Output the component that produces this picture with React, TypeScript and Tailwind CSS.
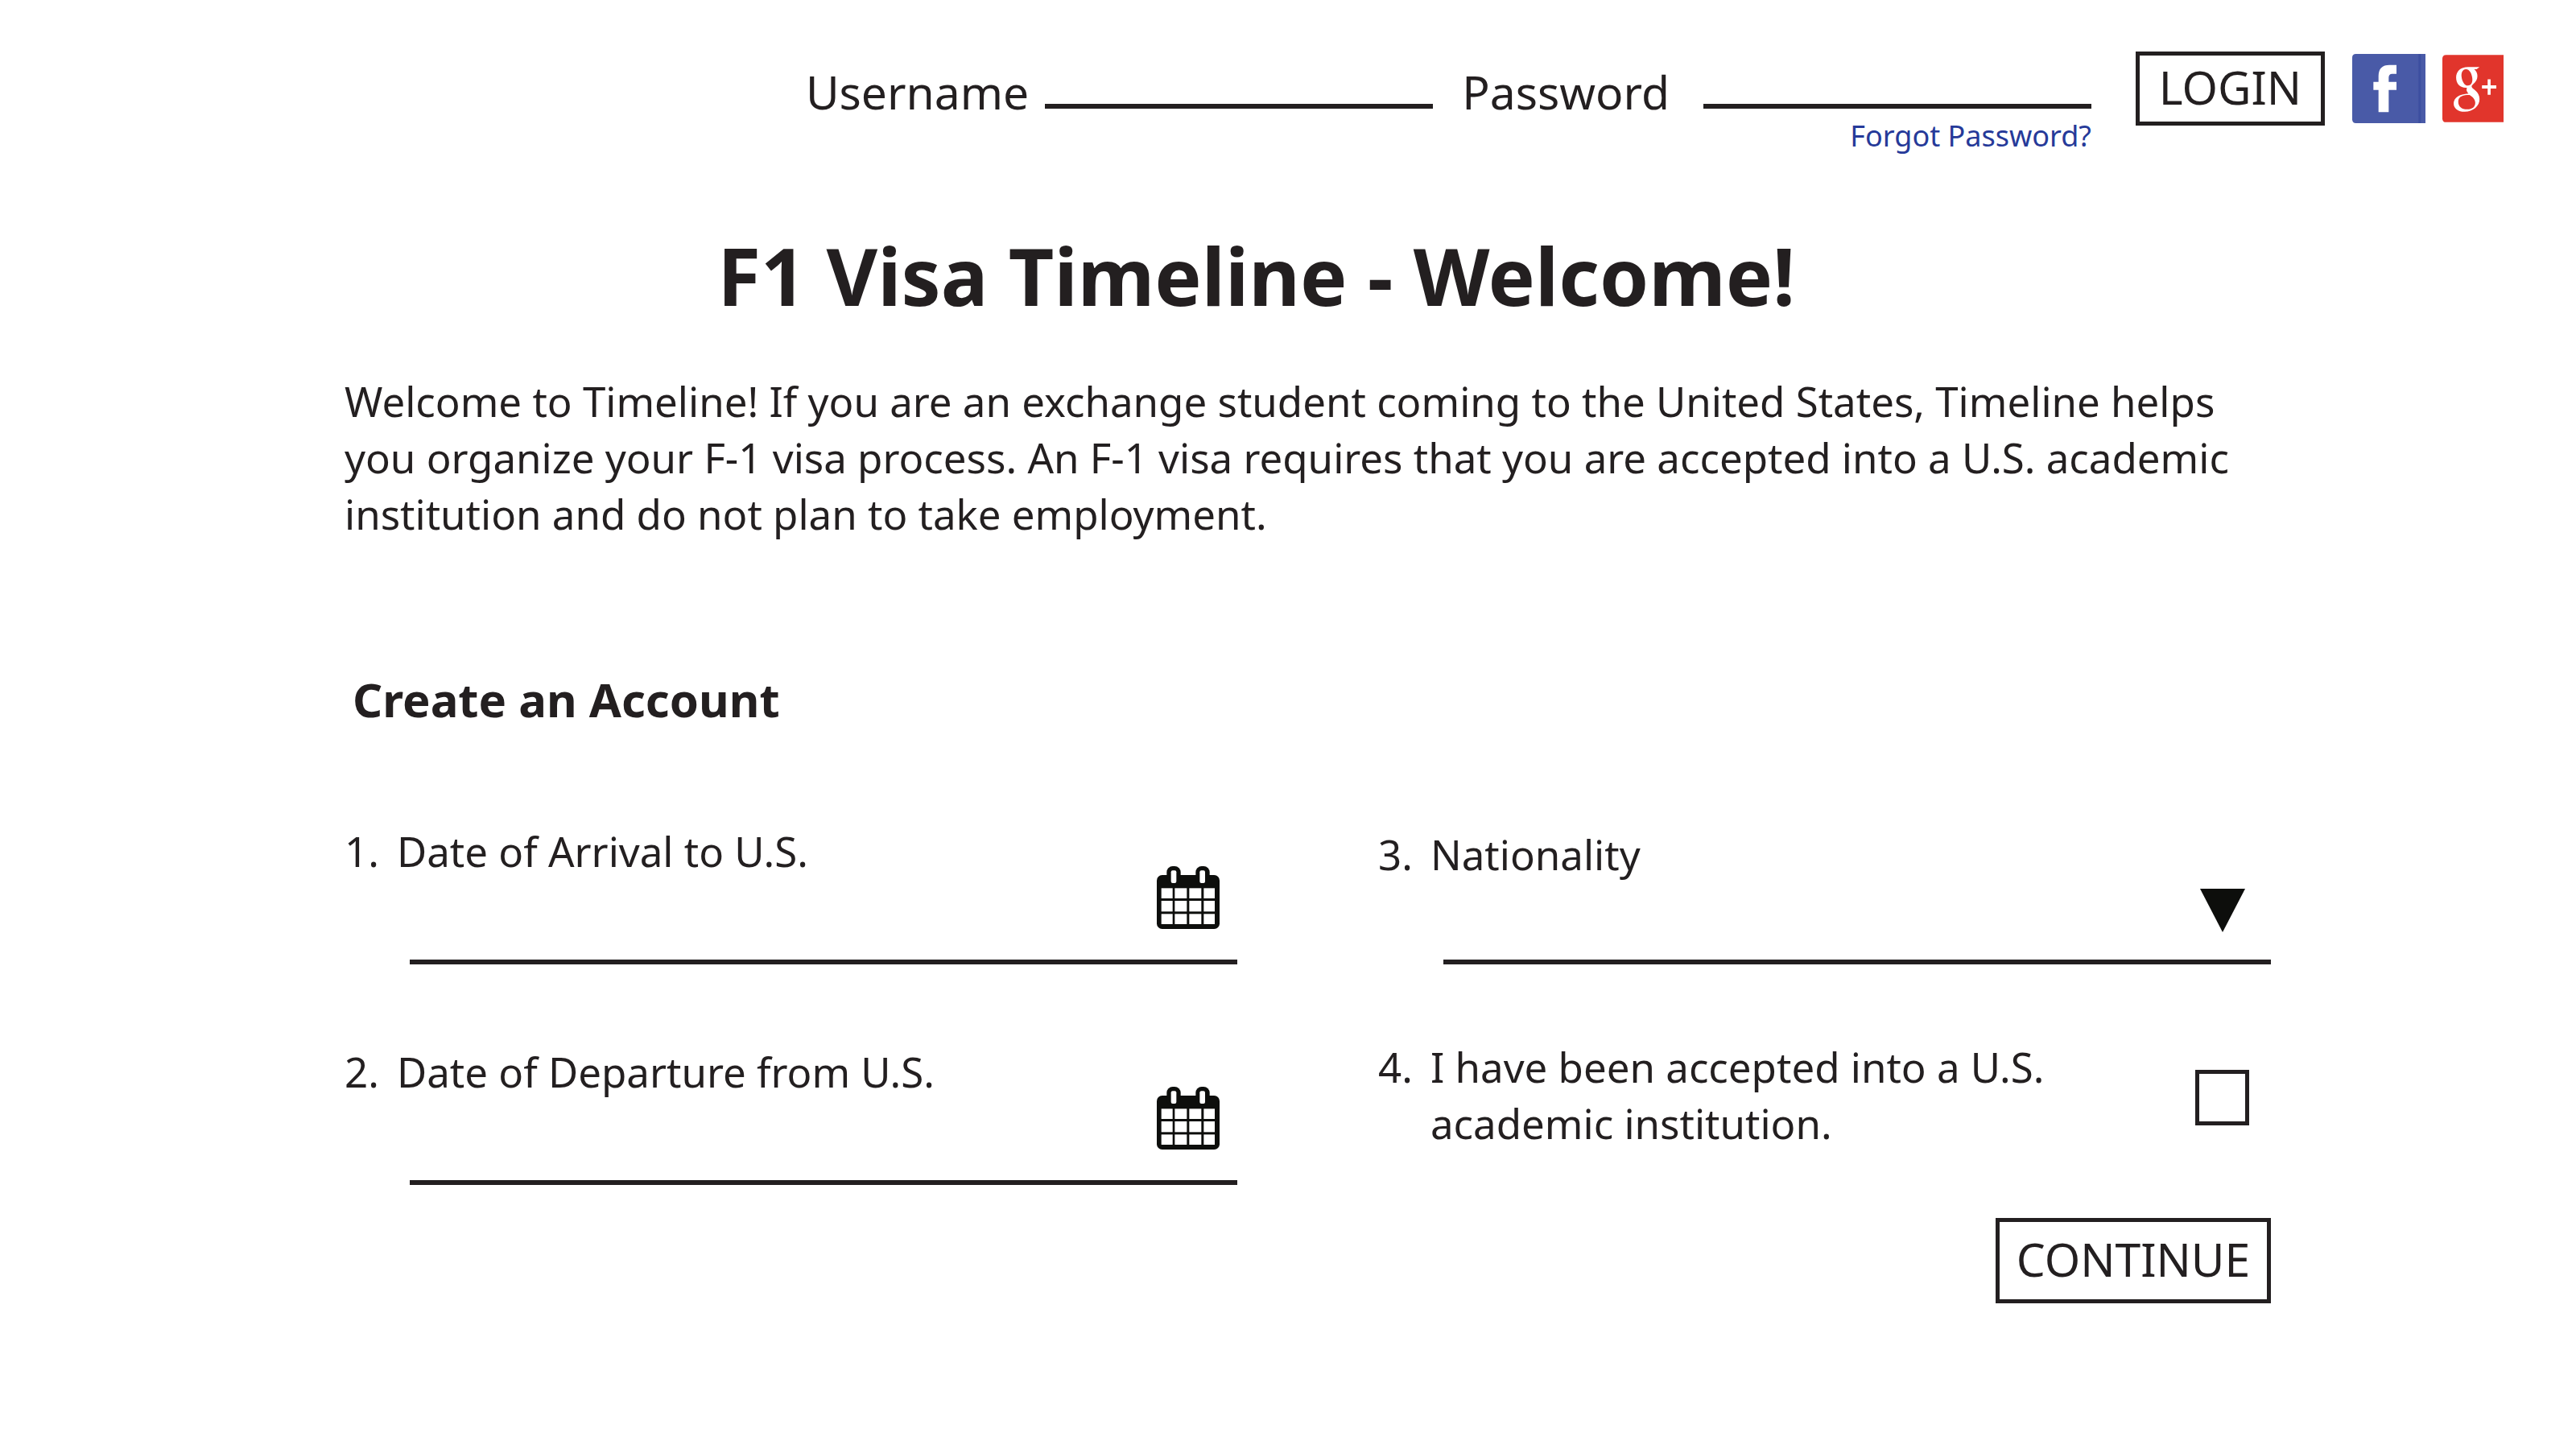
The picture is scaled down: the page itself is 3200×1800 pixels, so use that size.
import type { ReactNode } from "react";

function FacebookLogo() {
  return (
    <svg viewBox="0 0 273 258" className="block h-[86px] w-[91px]" aria-hidden="true">
      <path d="M14 0H273V258H14Q0 258 0 244V14Q0 0 14 0Z" fill="#495aa7" />
      <rect x="247" width="9" height="258" fill="#3c4ea0" />
      <path
        d="M98 217V134H79V104H98V82Q98 41 139 41H165V74H149Q136 74 136 88V104H165V134H136V217Z"
        fill="#fff"
      />
    </svg>
  );
}

function GooglePlusLogo() {
  return (
    <svg viewBox="0 0 227 250" className="block h-[84px] w-[76px]" aria-hidden="true">
      <path d="M14 0H227V250H14Q0 250 0 236V14Q0 0 14 0Z" fill="#e1352c" />
      <path
        fillRule="evenodd"
        fill="#fff"
        d="M138 45L127 53H118C126 59 130 68 130 79C130 92 124 101 115 108C109 113 107 117 110 121C115 129 138 137 138 164C138 190 114 211 83 211C58 211 42 199 42 180C42 160 62 146 97 144C90 137 88 130 91 122C67 124 51 108 51 84C51 60 68 45 95 45ZM87 53C75 54 70 65 71 80C73 99 83 115 95 114C107 113 113 102 111 86C109 67 99 52 87 53ZM91 149C71 150 59 158 59 174C59 191 71 202 92 202C111 202 122 193 122 178C122 165 113 157 101 149Z"
      />
      <path d="M168 91H179V113H200V125H179V148H168V125H147V113H168Z" fill="#fff" />
    </svg>
  );
}

function CalendarIcon() {
  const columns = [
    [17, 42],
    [67, 45],
    [121, 45],
    [175, 41],
  ];
  const rows = [
    [82, 38],
    [129, 40],
    [178, 38],
  ];
  return (
    <svg viewBox="0 0 234 234" className="block size-[78px]" aria-hidden="true">
      <g fill="#0d0e0c">
        <rect y="33" width="234" height="201" rx="20" />
        <rect x="37" width="52" height="70" rx="22" />
        <rect x="145" width="52" height="70" rx="22" />
      </g>
      <g fill="#fff">
        <rect x="53" y="16" width="20" height="47" rx="6" />
        <rect x="160" y="16" width="20" height="47" rx="6" />
        {rows.map(([y, height]) =>
          columns.map(([x, width]) => <rect key={`${x}-${y}`} x={x} y={y} width={width} height={height} />),
        )}
      </g>
    </svg>
  );
}

function QuestionLabel({ number, htmlFor, children }: { number: number; htmlFor: string; children: ReactNode }) {
  return (
    <label htmlFor={htmlFor} className="flex flex-1">
      <span className="w-[65px] shrink-0">{number}.</span>
      <span>{children}</span>
    </label>
  );
}

function DateQuestion({ number, id, label }: { number: number; id: string; label: string }) {
  return (
    <div>
      <QuestionLabel number={number} htmlFor={id}>
        {label}
      </QuestionLabel>
      <div className="ml-[81px] flex h-[106px] items-end border-b-6 border-[#231f20] pr-[22px] pb-[38px]">
        <input id={id} type="text" className="h-[60px] min-w-0 flex-1 bg-transparent outline-none" />
        <button type="button" aria-label={`Pick ${label}`} className="shrink-0">
          <CalendarIcon />
        </button>
      </div>
    </div>
  );
}

export default function App() {
  return (
    <div className="min-h-screen bg-white font-['Noto_Sans',sans-serif] text-[51px] leading-[70px] text-[#231f20]">
      <header className="flex items-start justify-end pt-16 pr-[90px] text-[57px] leading-[64px]">
        <div className="flex pt-[18px]">
          <label htmlFor="username" className="mr-[20px]">
            Username
          </label>
          <input
            id="username"
            type="text"
            className="h-[53px] w-[482px] border-b-6 border-[#231f20] bg-transparent outline-none"
          />
        </div>
        <div className="ml-[36px] flex pt-[18px]">
          <label htmlFor="password" className="mr-[42px]">
            Password
          </label>
          <div className="flex flex-col items-end gap-[10px]">
            <input
              id="password"
              type="password"
              className="h-[53px] w-[482px] border-b-6 border-[#231f20] bg-transparent outline-none"
            />
            <a href="#forgot" className="text-[36px] leading-[48px] text-[#263a99]">
              Forgot Password?
            </a>
          </div>
        </div>
        <div className="ml-[55px] flex h-[92px] items-center">
          <button type="button" className="h-full w-[235px] border-5 border-[#231f20] pb-1">
            LOGIN
          </button>
          <a href="#facebook" aria-label="Log in with Facebook" className="ml-[34px]">
            <FacebookLogo />
          </a>
          <a href="#google" aria-label="Log in with Google Plus" className="ml-[21px]">
            <GooglePlusLogo />
          </a>
        </div>
      </header>

      <main className="pr-[379px] pl-[428px]">
        <h1 className="mt-[93px] pr-32 text-center text-[98px] leading-[112px] font-bold">
          F1 Visa Timeline - Welcome!
        </h1>
        <p className="mt-[65px]">
          Welcome to Timeline! If you are an exchange student coming to the United States, Timeline helps you organize
          your F-1 visa process. An F-1 visa requires that you are accepted into a U.S. academic institution and do not
          plan to take employment.
        </p>

        <h2 className="mt-[161px] pl-[10px] text-[58px] font-bold">Create an Account</h2>
        <form className="mt-[118px] grid grid-cols-2 gap-x-[175px]">
          <div className="flex flex-col gap-[98px]">
            <DateQuestion number={1} id="arrival" label="Date of Arrival to U.S." />
            <DateQuestion number={2} id="departure" label="Date of Departure from U.S." />
          </div>

          <div className="flex flex-col pt-1">
            <QuestionLabel number={3} htmlFor="nationality">
              Nationality
            </QuestionLabel>
            <div className="relative ml-[81px] h-[102px] border-b-6 border-[#231f20]">
              <select id="nationality" className="size-full appearance-none bg-transparent outline-none" />
              <svg
                viewBox="0 0 56 54"
                className="pointer-events-none absolute right-8 bottom-[34px] h-[54px] w-[56px]"
                aria-hidden="true"
              >
                <path d="M0 0H56L28 54Z" fill="#0d0e0c" />
              </svg>
            </div>

            <div className="mt-[92px] flex items-start pr-[27px]">
              <QuestionLabel number={4} htmlFor="accepted">
                I have been accepted into a U.S. academic institution.
              </QuestionLabel>
              <input
                id="accepted"
                type="checkbox"
                className="mt-[39px] h-[69px] w-[67px] shrink-0 appearance-none border-5 border-[#231f20] checked:bg-[#231f20]"
              />
            </div>

            <button
              type="submit"
              className="mt-[83px] h-[106px] w-[342px] self-end border-5 border-[#231f20] pb-1 text-[57px]"
            >
              CONTINUE
            </button>
          </div>
        </form>
      </main>
    </div>
  );
}
